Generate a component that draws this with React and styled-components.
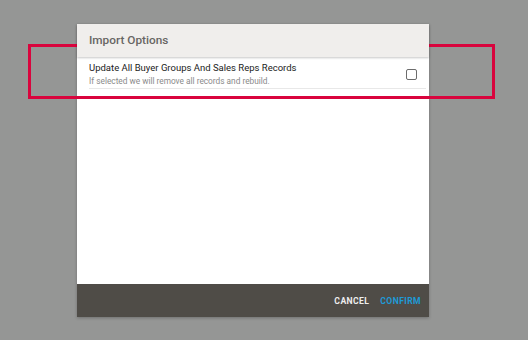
import React from "react";
import styled, { createGlobalStyle } from "styled-components";

const Global = createGlobalStyle`
  html, body { margin: 0; padding: 0; }
  body {
    background: #959695;
    font-family: Roboto, "Liberation Sans", Arial, sans-serif;
    width: 528px;
    height: 340px;
    overflow: hidden;
  }
`;

const Page = styled.div`
  position: relative;
  width: 528px;
  height: 340px;
  padding: 24px 0 0 77px;
  box-sizing: border-box;
`;

const Dialog = styled.div`
  width: 352px;
  height: 293px;
  background: #fff;
  display: flex;
  flex-direction: column;
  box-shadow: 0 1px 3px rgba(0,0,0,0.25);
`;

const Header = styled.div`
  height: 33px;
  background: #f0eeec;
  display: flex;
  align-items: center;
  padding: 0 12px 1px;
  box-sizing: border-box;
  box-shadow: 0 1px 2px rgba(0,0,0,0.22);
  position: relative;
  z-index: 1;
`;

const Title = styled.h2`
  margin: 0;
  font-size: 11.8px;
  font-weight: 500;
  color: #676563;
`;

const Body = styled.div`
  flex: 1;
  padding: 0 3px 0 12px;
`;

const Row = styled.div`
  display: flex;
  align-items: center;
  padding: 4px 0 1px;
  border-bottom: 1px solid #e8e8e8;
`;

const RowText = styled.div`
  flex: 1;
  display: flex;
  flex-direction: column;
`;

const RowTitle = styled.div`
  font-size: 9.5px;
  line-height: 14px;
  color: #222;
`;

const RowSub = styled.div`
  font-size: 8.3px;
  line-height: 12px;
  color: #8a8a8a;
`;

const Checkbox = styled.span`
  width: 11px;
  height: 11px;
  box-sizing: border-box;
  border: 1.5px solid #6c6c6c;
  border-radius: 2px;
  margin: 0 9px 0 0;
`;

const Footer = styled.div`
  height: 33px;
  background: #4f4c47;
  display: flex;
  align-items: center;
  justify-content: flex-end;
  gap: 11px;
  padding: 0 8px 0 0;
`;

const Btn = styled.button`
  background: none;
  border: none;
  padding: 0;
  font-family: Roboto, "Liberation Sans", Arial, sans-serif;
  font-size: 8.6px;
  font-weight: 700;
  letter-spacing: 0.4px;
  color: ${(p) => (p.$primary ? "#1e9ad6" : "#eeeeee")};
`;

const Highlight = styled.div`
  position: absolute;
  left: 28px;
  top: 44px;
  width: 467px;
  height: 55px;
  box-sizing: border-box;
  border: 3px solid #d9043d;
  pointer-events: none;
`;

export default function App() {
  return (
    <>
      <Global />
      <Page>
        <Dialog>
          <Header>
            <Title>Import Options</Title>
          </Header>
          <Body>
            <Row>
              <RowText>
                <RowTitle>Update All Buyer Groups And Sales Reps Records</RowTitle>
                <RowSub>If selected we will remove all records and rebuild.</RowSub>
              </RowText>
              <Checkbox />
            </Row>
          </Body>
          <Footer>
            <Btn>CANCEL</Btn>
            <Btn $primary>CONFIRM</Btn>
          </Footer>
        </Dialog>
        <Highlight />
      </Page>
    </>
  );
}
